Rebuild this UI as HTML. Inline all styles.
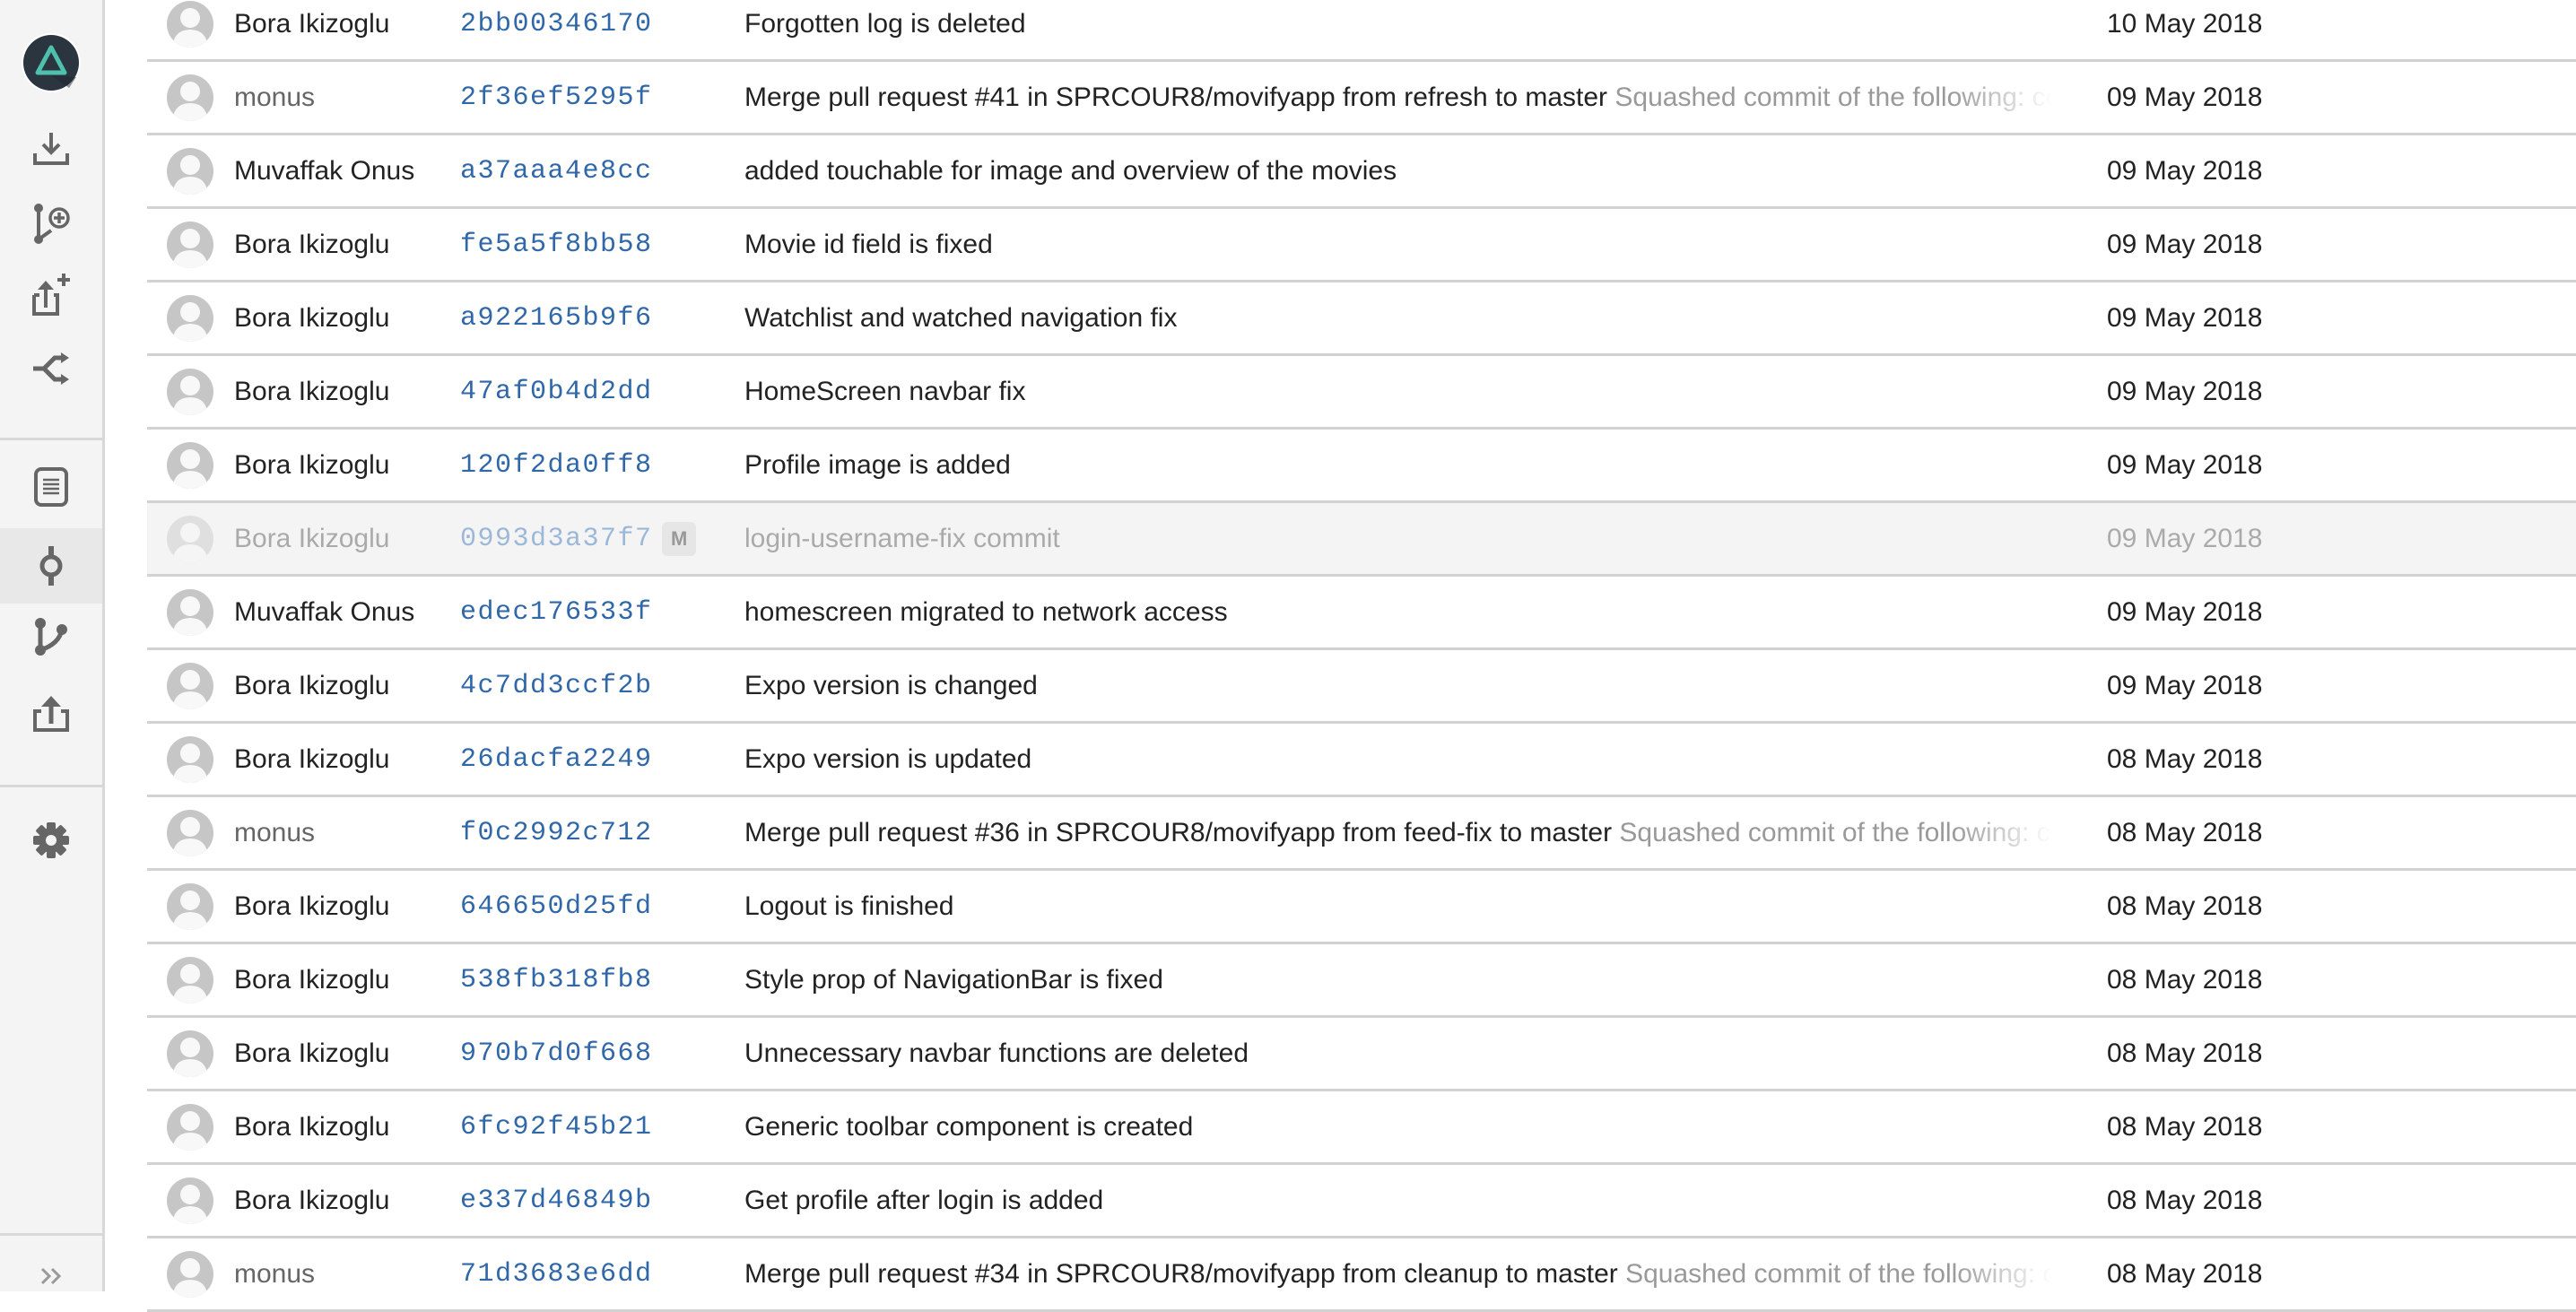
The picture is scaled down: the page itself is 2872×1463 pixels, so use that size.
<!DOCTYPE html>
<html><head><meta charset="utf-8">
<style>
*{margin:0;padding:0;box-sizing:border-box}
html,body{width:2872px;height:1440px;overflow:hidden;background:#fff;font-family:"Liberation Sans",Arial,sans-serif}
#side{position:absolute;left:0;top:0;width:117px;height:1440px;background:#f4f4f4;border-right:3px solid #d8d8d8}
.sep{position:absolute;left:0;width:114px;height:3px;background:#d8d8d8}
.ic{position:absolute;left:0;width:114px;display:flex;justify-content:center;align-items:center}
.row{position:absolute;left:164px;right:0;height:82px;border-bottom:3px solid #d2d2d2}
.row>*{position:absolute;top:50%;transform:translateY(-50%);white-space:nowrap}
.av{left:22px;width:52px;height:52px}
.nm{left:97px;font-size:30px;color:#222}
.nm.g{color:#666}
.h{left:349px;font-family:"Liberation Mono",monospace;font-size:30px;color:#2f67a8;letter-spacing:1.5px}
.m{left:666px;font-size:30px;color:#222;width:1456px;overflow:hidden}
.m span{color:#999}
.fade{position:absolute;left:2012px;width:112px;top:0;bottom:0;background:linear-gradient(to right,rgba(255,255,255,0),#fff);transform:none}
.d{left:2185px;font-size:30px;color:#222}
.sel{background:#f4f4f4}
.sel .nm,.sel .m,.sel .d{color:#aaa}
.sel .h{color:#9cb8d8}
.sel .av{opacity:.45}
.badge{left:574px;background:#e6e6e6;color:#999;font-weight:bold;font-size:22px;padding:6px 10px;border-radius:6px}
</style></head><body>
<div id="side">
 <div class="ic" style="top:35px;height:70px"><svg width="68" height="68" viewBox="0 0 68 68"><circle cx="34" cy="34" r="33" fill="#fff"/><circle cx="34" cy="34" r="31" fill="#2b3540"/><path d="M34 48 L54 62 L62 50 Z" fill="#1f272f" opacity=".5"/><path d="M34 17 L49 45 L19 45 Z" fill="none" stroke="#4fc0ae" stroke-width="5" stroke-linejoin="round"/></svg></div>
 <div class="ic" style="top:145px;height:40px"><svg width="42" height="40" viewBox="0 0 42 40"><path d="M21 3 V25 M12 16 L21 25 L30 16" fill="none" stroke="#666" stroke-width="4"/><path d="M3 26 V37 H39 V26" fill="none" stroke="#666" stroke-width="4"/></svg></div>
 <div class="ic" style="top:225px;height:50px"><svg width="44" height="50" viewBox="0 0 44 50"><circle cx="8" cy="7" r="5" fill="#666"/><circle cx="8" cy="42" r="5" fill="#666"/><path d="M8 7 V42 L22 32" fill="none" stroke="#666" stroke-width="4"/><circle cx="31" cy="18" r="10" fill="none" stroke="#666" stroke-width="3.5"/><path d="M31 12 V24 M25 18 H37" stroke="#666" stroke-width="3.5"/></svg></div>
 <div class="ic" style="top:303px;height:52px"><svg width="46" height="52" viewBox="0 0 46 52"><path d="M4 26 H10 M26 26 H30 V47 H4 V26" fill="none" stroke="#666" stroke-width="4"/><path d="M17 40 V18" stroke="#666" stroke-width="4"/><path d="M8 20 L17 10 L26 20 Z" fill="#666"/><path d="M37 2 V16 M30 9 H44" stroke="#666" stroke-width="4"/></svg></div>
 <div class="ic" style="top:391px;height:40px"><svg width="44" height="36" viewBox="0 0 44 36"><path d="M2 18 H14 L26 6 H36 M14 18 L26 30 H36" fill="none" stroke="#666" stroke-width="5"/><path d="M33 0 L42 6 L33 12 Z M33 24 L42 30 L33 36 Z" fill="#666"/></svg></div>
 <div class="sep" style="top:488px"></div>
 <div class="ic" style="top:520px;height:46px"><svg width="40" height="46" viewBox="0 0 40 46"><rect x="3" y="3" width="34" height="40" rx="6" fill="none" stroke="#666" stroke-width="4"/><path d="M11 15 H29 M11 20 H29 M11 25 H29 M11 30 H29" stroke="#666" stroke-width="2.5"/></svg></div>
 <div class="ic" style="top:589px;height:84px;background:#e8e8e8"><svg width="30" height="44" viewBox="0 0 30 44"><path d="M15 0 V10 M15 34 V44" stroke="#666" stroke-width="6"/><circle cx="15" cy="22" r="10" fill="none" stroke="#666" stroke-width="5"/></svg></div>
 <div class="ic" style="top:688px;height:44px"><svg width="38" height="44" viewBox="0 0 38 44"><circle cx="7" cy="7" r="6" fill="#666"/><circle cx="7" cy="37" r="6" fill="#666"/><circle cx="31" cy="14" r="6" fill="#666"/><path d="M7 7 V37 Q28 30 31 14" fill="none" stroke="#666" stroke-width="5"/></svg></div>
 <div class="ic" style="top:775px;height:42px"><svg width="42" height="42" viewBox="0 0 42 42"><path d="M10 18 H3 V39 H39 V18 H32" fill="none" stroke="#666" stroke-width="4"/><path d="M21 32 V12" stroke="#666" stroke-width="5"/><path d="M10 13 L21 1 L32 13 Z" fill="#666"/></svg></div>
 <div class="sep" style="top:875px"></div>
 <div class="ic" style="top:916px;height:42px"><svg width="42" height="42" viewBox="0 0 42 42"><g fill="#666" transform="translate(21 21)"><rect x="-5" y="-20" width="10" height="40" rx="2"/><rect x="-5" y="-20" width="10" height="40" rx="2" transform="rotate(45)"/><rect x="-5" y="-20" width="10" height="40" rx="2" transform="rotate(90)"/><rect x="-5" y="-20" width="10" height="40" rx="2" transform="rotate(135)"/><circle r="14"/></g><circle cx="21" cy="21" r="6" fill="#f4f4f4"/></svg></div>
 <div class="sep" style="top:1375px"></div>
 <div class="ic" style="top:1405px;height:36px"><svg width="26" height="22" viewBox="0 0 26 22"><path d="M3 3 L11 11 L3 19 M14 3 L22 11 L14 19" fill="none" stroke="#999" stroke-width="3"/></svg></div>
</div>
<svg width="0" height="0" style="position:absolute"><defs><symbol id="a" viewBox="0 0 52 52"><clipPath id="c"><circle cx="26" cy="26" r="26"/></clipPath><g clip-path="url(#c)"><rect width="52" height="52" fill="#c6c6c6"/><path d="M6 52 Q8 32 26 32 Q44 32 46 52 Z" fill="#f8f8f8"/><circle cx="26" cy="19" r="11" fill="#f8f8f8"/></g></symbol></defs></svg>
<div id="rows"></div>
<script>
var R=[
["Bora Ikizoglu","2bb00346170","Forgotten log is deleted","","10 May 2018"],
["monus","2f36ef5295f","Merge pull request #41 in SPRCOUR8/movifyapp from refresh to master ","Squashed commit of the following: commit","09 May 2018"],
["Muvaffak Onus","a37aaa4e8cc","added touchable for image and overview of the movies","","09 May 2018"],
["Bora Ikizoglu","fe5a5f8bb58","Movie id field is fixed","","09 May 2018"],
["Bora Ikizoglu","a922165b9f6","Watchlist and watched navigation fix","","09 May 2018"],
["Bora Ikizoglu","47af0b4d2dd","HomeScreen navbar fix","","09 May 2018"],
["Bora Ikizoglu","120f2da0ff8","Profile image is added","","09 May 2018"],
["Bora Ikizoglu","0993d3a37f7","login-username-fix commit","","09 May 2018"],
["Muvaffak Onus","edec176533f","homescreen migrated to network access","","09 May 2018"],
["Bora Ikizoglu","4c7dd3ccf2b","Expo version is changed","","09 May 2018"],
["Bora Ikizoglu","26dacfa2249","Expo version is updated","","08 May 2018"],
["monus","f0c2992c712","Merge pull request #36 in SPRCOUR8/movifyapp from feed-fix to master ","Squashed commit of the following: commit","08 May 2018"],
["Bora Ikizoglu","646650d25fd","Logout is finished","","08 May 2018"],
["Bora Ikizoglu","538fb318fb8","Style prop of NavigationBar is fixed","","08 May 2018"],
["Bora Ikizoglu","970b7d0f668","Unnecessary navbar functions are deleted","","08 May 2018"],
["Bora Ikizoglu","6fc92f45b21","Generic toolbar component is created","","08 May 2018"],
["Bora Ikizoglu","e337d46849b","Get profile after login is added","","08 May 2018"],
["monus","71d3683e6dd","Merge pull request #34 in SPRCOUR8/movifyapp from cleanup to master ","Squashed commit of the following: commit","08 May 2018"]];
var h="";
R.forEach(function(r,i){
 var top=-13+82*i;
 h+='<div class="row'+(i==7?' sel':'')+'" style="top:'+top+'px">'+
 '<svg class="av" viewBox="0 0 52 52"><use href="#a"/></svg>'+
 '<div class="nm'+(r[0]=="monus"?' g':'')+'">'+r[0]+'</div>'+
 '<div class="h">'+r[1]+'</div>'+(i==7?'<div class="badge">M</div>':'')+
 '<div class="m">'+r[2]+(r[3]?'<span>'+r[3]+'</span>':'')+'</div>'+
 (r[3]?'<div class="fade"></div>':'')+
 '<div class="d">'+r[4]+'</div></div>';
});
document.getElementById("rows").innerHTML=h;
</script>
</body></html>
